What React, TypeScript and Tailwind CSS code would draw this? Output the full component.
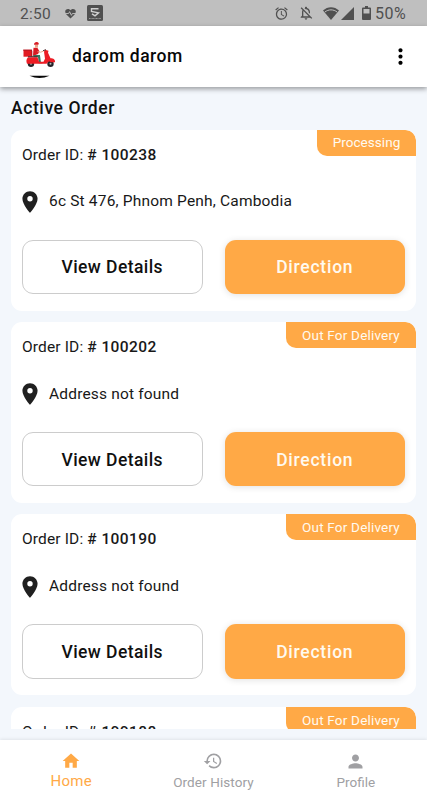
import {
  MdAlarm,
  MdHistory,
  MdHome,
  MdLocationOn,
  MdMoreVert,
  MdOutlineNotificationsOff,
  MdPerson,
} from "react-icons/md";

type Order = {
  id: string;
  status: string;
  address: string;
};

const ORDERS: Order[] = [
  { id: "100238", status: "Processing", address: "6c St 476, Phnom Penh, Cambodia" },
  { id: "100202", status: "Out For Delivery", address: "Address not found" },
  { id: "100190", status: "Out For Delivery", address: "Address not found" },
  { id: "100188", status: "Out For Delivery", address: "Address not found" },
];

function StatusBar() {
  return (
    <div className="flex h-[26px] shrink-0 items-center bg-[#bfbfbf] pl-5 pr-5 text-[#505050]">
      <span className="w-[31px] whitespace-nowrap pt-px text-[15.5px] leading-[26px] tracking-[0.3px]">2:50</span>
      <svg viewBox="0 0 24 24" className="ml-[14px] h-[11px] w-[11px]">
        <path fill="currentColor" d="M12 23 3 14C-2 8 1 2 6.500 2 9 2 11 3.500 12 5c1-1.500 3-3 5.500-3C23 2 26 8 21 14Z" />
        <path fill="none" stroke="#bfbfbf" strokeWidth="2" d="M1 12h7l2-4 4 8 2-4h8" />
      </svg>
      <svg viewBox="0 0 16 16" className="ml-[11px] h-4 w-4">
        <rect width="16" height="16" rx="1.500" fill="currentColor" />
        <path d="M11.500 3.800h-7v2.700l7 1.300L8 10.800 5 8.800" fill="none" stroke="#d0d0d0" strokeWidth="1.400" />
        <path d="M2 13.500h12" stroke="#999" strokeWidth="1" strokeDasharray="1 .4" />
      </svg>
      <MdAlarm className="ml-auto h-[15px] w-[15px]" />
      <MdOutlineNotificationsOff className="ml-[9px] h-4 w-4" />
      <svg viewBox="0 0 16 13" className="ml-[9px] h-[13px] w-4">
        <path fill="currentColor" d="M8 13 0 3.500C4.500-1 11.500-1 16 3.500Z" />
        <path fill="none" stroke="#bfbfbf" strokeWidth="1" d="M1.800 5.100c3.700-3 8.700-3 12.400 0" />
      </svg>
      <svg viewBox="0 0 13 13" className="ml-[2px] h-[13px] w-[13px]">
        <path fill="currentColor" d="M13 0v13H0Z" />
      </svg>
      <svg viewBox="0 0 9 14" className="ml-2 h-[14px] w-[9px]">
        <path fill="currentColor" d="M3 0h3v1.500h2q1 0 1 1V13q0 1-1 1H1q-1 0-1-1V2.500q0-1 1-1h2Z" />
        <path fill="#bfbfbf" d="M1.500 3h6v4.500h-6Z" />
      </svg>
      <span className="ml-[4px] w-[32px] whitespace-nowrap pt-px text-[16px] leading-[26px] tracking-[0.5px]">50%</span>
    </div>
  );
}

function ScooterLogo() {
  return (
    <svg viewBox="0 0 40 44" className="h-11 w-10">
      <g transform="translate(0 1.700)">
        {/* delivery box */}
        <path fill="#e11b22" d="M3.500 13h8.500v7H3.500Z" />
        <path fill="#9d1720" d="M3 13h9v.8H3ZM11.500 14h.8v6h-.8Z" />
        {/* rider */}
        <path fill="#e9a88b" d="M15 8h3v3h-3Z" />
        <path fill="#d81c24" d="M14 8c0-3 3.500-3.500 4.800-1.500l-.4 1.500ZM13.500 11l4 .3 2 3.500-1.500 2.500-5 2Z" />
        <path fill="none" stroke="#e9a88b" strokeWidth="1" d="m17.500 15 3 .5 3-1" />
        <path fill="none" stroke="#34765e" strokeWidth="2.200" d="M13.500 19.500h5.500l.8 6" />
        <path fill="none" stroke="#263238" strokeWidth="1.200" d="M18.500 26h4" />
        {/* scooter body */}
        <circle cx="11" cy="27" r="3.200" fill="#24242a" />
        <circle cx="30.500" cy="27" r="3.200" fill="#24242a" />
        <circle cx="11" cy="27" r="1" fill="#bbb" />
        <circle cx="30.500" cy="27" r="1" fill="#bbb" />
        <path fill="#ed1c24" d="M8 20.500h9.500l1.500 4.500h4.500l1.500-3-1-7 1-2 3.500 1-.5 2 2.500 5.500c3 0 5 1.500 4.500 4h-4l-2-1-2.500 2.500H7c-1-2.500-.8-4.500 1-6.500Z" />
        <path fill="none" stroke="#4d3034" strokeWidth="1" d="M8 20h9.500M23 14l3-1" />
      </g>
      {/* rounded base line */}
      <path fill="#080808" d="M9.500 40.700h20Q19.500 45.500 9.500 40.700Z" />
    </svg>
  );
}

function Header() {
  return (
    <header className="z-10 flex h-[61px] shrink-0 items-center bg-white pl-5 pr-[14px] shadow-[0_2px_5px_rgba(0,0,0,0.38)]">
      <ScooterLogo />
      <h1 className="ml-3 text-[17.5px] font-medium tracking-[0.5px] text-[#080808]">darom darom</h1>
      <MdMoreVert className="ml-auto h-[25px] w-[25px] text-black" />
    </header>
  );
}

function OrderCard({ order }: { order: Order }) {
  const processing = order.status === "Processing";

  return (
    <article className="h-[181px] shrink-0 overflow-hidden rounded-[11px] bg-white">
      <div className="flex h-[62px] items-start justify-between pl-[11px]">
        <p className="mt-[13px] whitespace-nowrap text-[15.5px] leading-[24px] tracking-[0.15px] text-[#181818]">
          Order ID: <span className="font-medium tracking-[0.42px]"># {order.id}</span>
        </p>
        <span
          className={`flex h-[26px] items-center justify-center rounded-bl-[10px] rounded-tr-[10px] bg-[#ffa946] text-[13.5px] text-[#fffaf0] ${
            processing ? "w-[99px] tracking-[0.05px]" : "w-[130px] tracking-[0.2px]"
          }`}
        >
          {order.status}
        </span>
      </div>
      <div className="flex h-[21px] items-center pl-[6px]">
        <MdLocationOn className="h-[26px] w-[26px] text-[#202020]" />
        <span className="ml-[6px] whitespace-nowrap text-[15.5px] tracking-[0.18px] text-[#181818]">
          {order.address}
        </span>
      </div>
      <div className="mt-[27px] grid grid-cols-2 gap-[22px] px-[11px]">
        <button className="h-[54.5px] rounded-[11px] border border-[#cccccc] pt-px text-[17.5px] font-medium tracking-[0.43px] text-[#101010]">
          View Details
        </button>
        <button className="h-[54.5px] rounded-[11px] bg-[#ffa946] pt-px text-[17.5px] font-medium tracking-[0.75px] text-[#fffaf0] shadow-[0_1px_7px_rgba(0,0,0,0.12)]">
          Direction
        </button>
      </div>
    </article>
  );
}

function BottomNav() {
  return (
    <nav className="z-10 grid h-[60px] shrink-0 grid-cols-3 bg-white shadow-[0_-1px_3px_rgba(0,0,0,0.08)]">
      <a className="flex flex-col items-center pt-[11px] text-[#ffa946]">
        <MdHome className="h-5 w-5" />
        <span className="text-[15px] leading-[21px] tracking-[0.3px]">Home</span>
      </a>
      <a className="flex flex-col items-center pt-[11px] text-[#a0a0a3]">
        <MdHistory className="h-5 w-5" />
        <span className="text-[13.5px] leading-[22px] tracking-[0.1px]">Order History</span>
      </a>
      <a className="flex flex-col items-center pt-[11px] text-[#a0a0a3]">
        <MdPerson className="h-[21px] w-[21px]" />
        <span className="text-[13.5px] leading-[20px]">Profile</span>
      </a>
    </nav>
  );
}

export default function App() {
  return (
    <div className="flex h-[800px] w-[427px] flex-col overflow-hidden bg-[#f3f7fc] font-[Roboto,sans-serif]">
      <StatusBar />
      <Header />
      <h2 className="mt-[10px] h-[32.5px] shrink-0 pl-[11px] text-[17.5px] font-medium leading-[23px] tracking-[0.6px] text-[#101010]">
        Active Order
      </h2>
      <main className="flex min-h-0 flex-1 flex-col gap-[11.4px] overflow-hidden px-[11px]">
        {ORDERS.map((order) => (
          <OrderCard key={order.id} order={order} />
        ))}
      </main>
      <div className="h-[11px] shrink-0" />
      <BottomNav />
    </div>
  );
}
